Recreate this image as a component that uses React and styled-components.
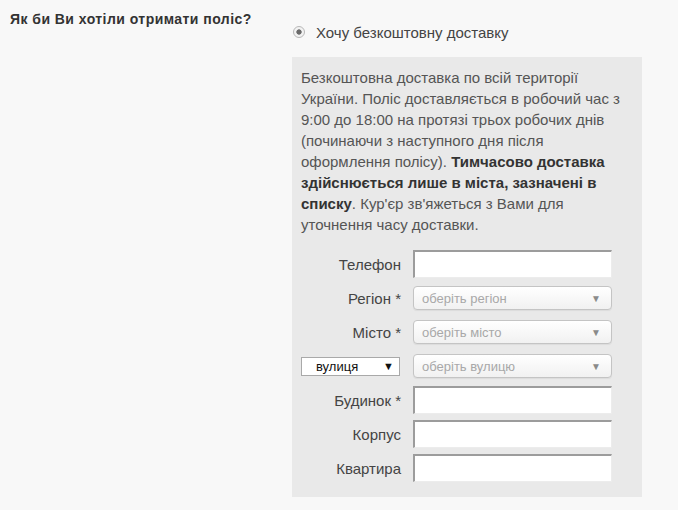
import React from "react";
import styled, { createGlobalStyle } from "styled-components";

const Global = createGlobalStyle`
  html, body { margin: 0; padding: 0; background: #f8f8f8; }
  body { font-family: "Liberation Sans", Arial, sans-serif; color: #444; }
`;

const Page = styled.div`
  display: flex;
  width: 678px;
  min-height: 510px;
  background: #f8f8f8;
`;

const QuestionCol = styled.div`
  width: 282px;
  padding: 11px 0 0 10px;
  font-size: 14px;
  letter-spacing: 0.45px;
  font-weight: bold;
  color: #333;
  line-height: 16px;
  white-space: nowrap;
`;

const AnswerCol = styled.div`
  width: 350px;
  display: flex;
  flex-direction: column;
`;

const RadioRow = styled.label`
  display: flex;
  align-items: center;
  height: 20px;
  margin-top: 22px;
  font-size: 15px;
  color: #444;
  gap: 11px;
`;

const Radio = styled.span`
  width: 10px;
  height: 10px;
  margin-left: 1px;
  border-radius: 50%;
  border: 1px solid #b8b8b8;
  background: radial-gradient(circle, #6a6a6a 0 2.3px, #f2f2f2 3px);
  flex: none;
`;

const Panel = styled.div`
  margin-top: 15px;
  background: #e9e9e9;
  padding: 10px 9px 12px;
`;

const Text = styled.p`
  margin: 0;
  font-size: 15px;
  line-height: 21px;
  color: #555;
  white-space: nowrap;
  b { color: #333; }
`;

const Form = styled.div`
  margin-top: 12px;
  display: grid;
  grid-template-columns: 100px 199px;
  grid-auto-rows: 34px;
  column-gap: 12px;
  align-items: center;
`;

const Label = styled.span`
  text-align: right;
  font-size: 15px;
  color: #444;
`;

const TextInput = styled.input`
  box-sizing: border-box;
  height: 28px;
  width: 199px;
  background: #fff;
  border: 1px solid #ececec;
  border-top: 2px solid #9c9c9c;
  border-left: 2px solid #9c9c9c;
  outline: none;
`;

const FancySelect = styled.div`
  box-sizing: border-box;
  height: 24px;
  width: 199px;
  border: 1px solid #c4c4c4;
  border-radius: 4px;
  background: linear-gradient(#ffffff, #f1f1f1);
  box-shadow: 0 1px 1px rgba(0, 0, 0, 0.06);
  display: flex;
  align-items: center;
  justify-content: space-between;
  padding: 0 10px 0 8px;
  font-size: 13px;
  color: #a8a8a8;
`;

const Arrow = styled.span`
  font-size: ${(p) => p.$size || 10}px;
  color: ${(p) => p.$color || "#8a8a8a"};
`;

const NativeSelect = styled.div`
  box-sizing: border-box;
  height: 19px;
  width: 99px;
  justify-self: end;
  margin-right: 1px;
  background: #fff;
  border: 1px solid #a9a9a9;
  display: flex;
  align-items: center;
  justify-content: space-between;
  padding: 0 5px 0 14px;
  font-size: 13px;
  color: #111;
`;

const fields = [
  { label: "Телефон", type: "input" },
  { label: "Регіон *", type: "select", ph: "оберіть регіон" },
  { label: "Місто *", type: "select", ph: "оберіть місто" },
  { label: "вулиця", type: "street", ph: "оберіть вулицю" },
  { label: "Будинок *", type: "input" },
  { label: "Корпус", type: "input" },
  { label: "Квартира", type: "input" },
];

export default function App() {
  return (
    <>
      <Global />
      <Page>
        <QuestionCol>Як би Ви хотіли отримати поліс?</QuestionCol>
        <AnswerCol>
          <RadioRow>
            <Radio />
            Хочу безкоштовну доставку
          </RadioRow>
          <Panel>
            <Text>
              Безкоштовна доставка по всій території
              <br />
              України. Поліс доставляється в робочий час з
              <br />
              9:00 до 18:00 на протязі трьох робочих днів
              <br />
              (починаючи з наступного дня після
              <br />
              оформлення полісу). <b>Тимчасово доставка</b>
              <br />
              <b>здійснюється лише в міста, зазначені в</b>
              <br />
              <b>списку</b>. Кур'єр зв'яжеться з Вами для
              <br />
              уточнення часу доставки.
            </Text>
            <Form>
              {fields.map((f) => (
                <React.Fragment key={f.label}>
                  {f.type === "street" ? (
                    <NativeSelect>
                      вулиця
                      <Arrow $color="#111" $size={11}>▼</Arrow>
                    </NativeSelect>
                  ) : (
                    <Label>{f.label}</Label>
                  )}
                  {f.type === "input" ? (
                    <TextInput />
                  ) : (
                    <FancySelect>
                      {f.ph}
                      <Arrow>▼</Arrow>
                    </FancySelect>
                  )}
                </React.Fragment>
              ))}
            </Form>
          </Panel>
        </AnswerCol>
      </Page>
    </>
  );
}
